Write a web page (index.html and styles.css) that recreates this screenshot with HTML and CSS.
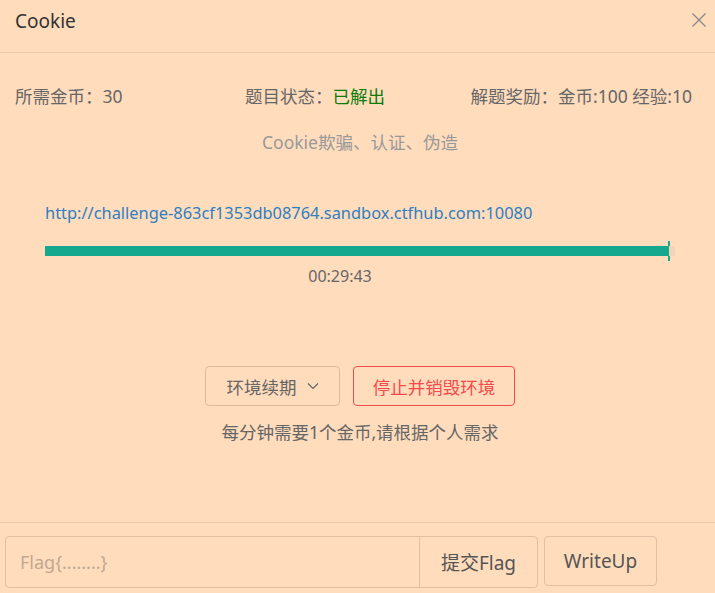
FILE: index.html
```html
<!DOCTYPE html>
<html lang="zh-CN">
<head>
<meta charset="utf-8">
<title>Cookie</title>
<link rel="stylesheet" href="styles.css">
</head>
<body>
<div class="dialog">
  <div class="header">
    <span class="title">Cookie</span>
    <svg class="close" width="16" height="16" viewBox="0 0 16 16"><path d="M1.5 1.5L14.5 14.5M14.5 1.5L1.5 14.5" stroke="#8a8a8a" stroke-width="1.4" fill="none"/></svg>
  </div>
  <div class="body">
    <div class="info">
      <span>所需金币：30</span>
      <span>题目状态：<span class="solved">已解出</span></span>
      <span>解题奖励：金币:100 经验:10</span>
    </div>
    <div class="tags">Cookie欺骗、认证、伪造</div>
    <div class="env">
      <a class="url" href="#">http://challenge-863cf1353db08764.sandbox.ctfhub.com:10080</a>
      <div class="bar">
        <div class="fill" style="width: 99%"></div>
        <div class="marker"></div>
      </div>
      <div class="time">00:29:43</div>
    </div>
    <div class="actions">
      <button class="btn renew">环境续期 <svg width="12" height="8" viewBox="0 0 12 8"><path d="M1 1.5L6 6.5L11 1.5" stroke="#666" stroke-width="1.2" fill="none"/></svg></button>
      <button class="btn stop">停止并销毁环境</button>
    </div>
    <div class="note">每分钟需要1个金币,请根据个人需求</div>
  </div>
  <div class="footer">
    <div class="flag-group">
      <input class="flag-input" type="text" placeholder="Flag{........}">
      <button class="submit">提交Flag</button>
    </div>
    <button class="writeup">WriteUp</button>
  </div>
</div>
</body>
</html>
```
FILE: styles.css
```css
html, body {
  margin: 0;
  padding: 0;
  background: #ffdcbc;
}
body {
  font-family: "Noto Sans", "Noto Sans CJK SC", sans-serif;
  font-size: 17.5px;
  color: #666;
  width: 715px;
  height: 593px;
  overflow: hidden;
}
.dialog {
  display: flex;
  flex-direction: column;
  height: 593px;
}
.header {
  height: 52px;
  border-bottom: 1px solid #f0c9a8;
  display: flex;
  align-items: center;
  justify-content: space-between;
  padding: 0 8px 0 15px;
  box-sizing: content-box;
}
.title {
  font-size: 19px;
  color: #333;
  margin-top: -11px;
}
.close {
  margin-top: -12px;
}
.body {
  flex: 1;
  padding-top: 31px;
}
.info {
  display: grid;
  grid-template-columns: 230px 1fr auto;
  padding: 0 23px 0 15px;
  line-height: 24px;
}
.solved {
  color: #0b7d0b;
}
.tags {
  margin-top: 22px;
  text-align: center;
  line-height: 24px;
  color: #999;
  padding-left: 5px;
}
.env {
  padding: 47px 40px 0 45px;
}
.url {
  display: block;
  color: #2f7fc1;
  text-decoration: none;
  line-height: 24px;
  font-size: 16.4px;
}
.bar {
  position: relative;
  margin-top: 21px;
  height: 10px;
  width: 630px;
  background: #f3d4b9;
}
.fill {
  height: 10px;
  background: #16a88f;
}
.marker {
  position: absolute;
  left: 623px;
  top: -5px;
  width: 2px;
  height: 20px;
  background: linear-gradient(#16a88f 0 5px, transparent 5px 15px, #16a88f 15px);
}
.time {
  margin-top: 8px;
  line-height: 24px;
  font-size: 16px;
  text-align: center;
  padding-right: 40px;
}
.actions {
  margin-top: 78px;
  display: flex;
  justify-content: center;
  gap: 13px;
  padding-left: 5px;
}
.btn {
  height: 40px;
  border-radius: 4px;
  background: transparent;
  font-family: inherit;
  font-size: 17.5px;
  padding: 0;
  cursor: pointer;
}
.renew {
  width: 135px;
  border: 1px solid #dbbb9e;
  color: #666;
  display: flex;
  align-items: center;
  justify-content: center;
  gap: 10px;
}
.stop {
  width: 162px;
  border: 1px solid #f44a4a;
  color: #f44a4a;
}
.note {
  margin-top: 14px;
  text-align: center;
  line-height: 24px;
  padding-left: 5px;
}
.footer {
  border-top: 1px solid #f0c9a8;
  height: 71px;
  display: flex;
  align-items: flex-start;
  padding: 13px 0 0 5px;
  gap: 6px;
  box-sizing: border-box;
}
.flag-group {
  display: flex;
  height: 50px;
  border: 1px solid #e0c0a3;
  border-radius: 4px;
}
.flag-input {
  width: 414px;
  border: none;
  border-right: 1px solid #e0c0a3;
  background: transparent;
  font-family: inherit;
  font-size: 18px;
  padding: 0 14px;
  box-sizing: border-box;
  color: #666;
  outline: none;
}
.flag-input::placeholder {
  color: #c2a890;
}
.submit {
  width: 117px;
  border: none;
  background: transparent;
  font-family: inherit;
  font-size: 19px;
  color: #555;
  padding: 0;
}
.writeup {
  width: 113px;
  height: 50px;
  border: 1px solid #e0c0a3;
  border-radius: 4px;
  background: transparent;
  font-family: inherit;
  font-size: 19px;
  color: #555;
  padding: 0;
}
```
